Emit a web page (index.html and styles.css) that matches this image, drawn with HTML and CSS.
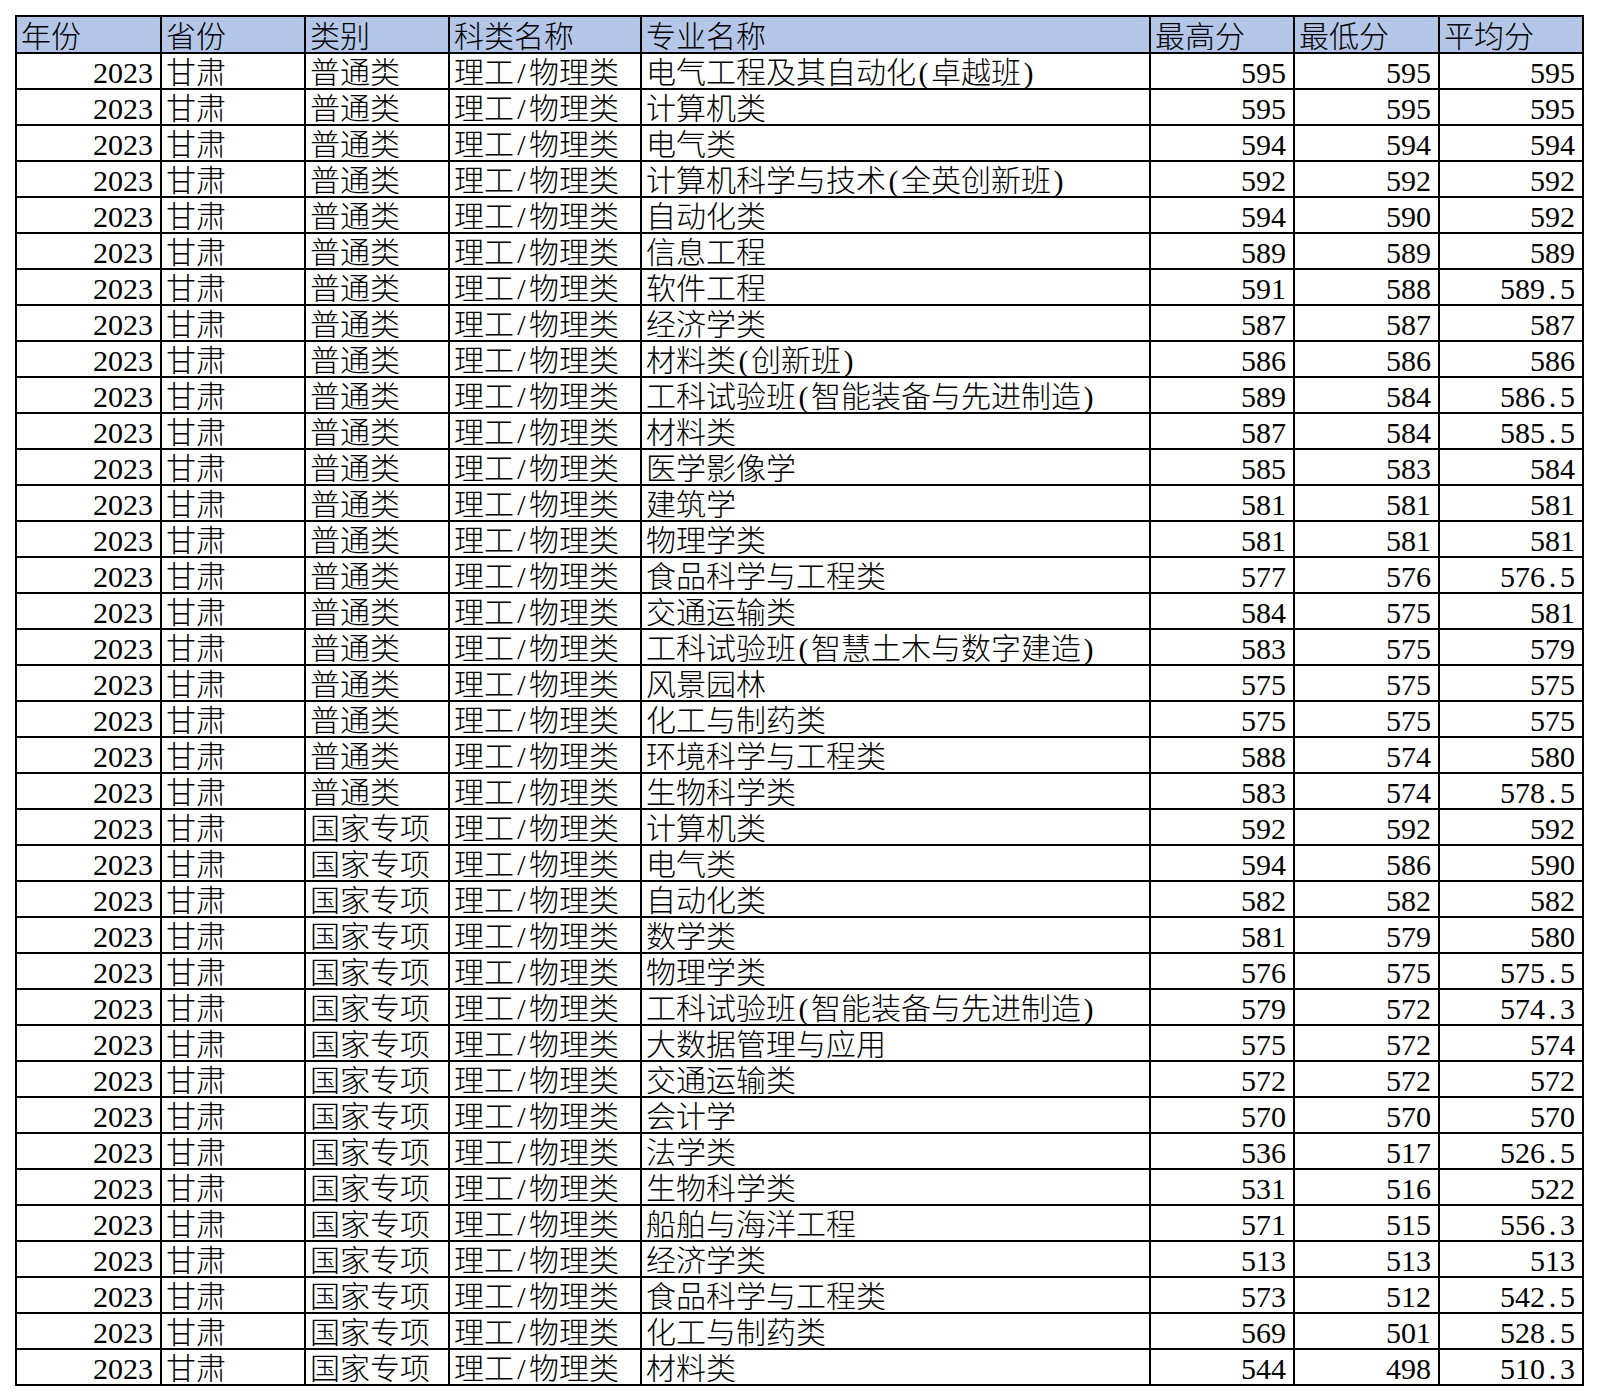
FILE: index.html
```html
<!DOCTYPE html>
<html lang="zh-CN">
<head>
<meta charset="utf-8">
<title>2023 甘肃 录取分数</title>
<link rel="stylesheet" href="styles.css">
</head>
<body>
<div class="sheet">
  <div class="row head"><div class="c">年份</div><div class="c">省份</div><div class="c">类别</div><div class="c">科类名称</div><div class="c">专业名称</div><div class="c">最高分</div><div class="c">最低分</div><div class="c">平均分</div></div>
  <div class="row"><div class="c n">2023</div><div class="c">甘肃</div><div class="c">普通类</div><div class="c">理工<span class="hw">/</span>物理类</div><div class="c">电气工程及其自动化<span class="hw">(</span>卓越班<span class="hw">)</span></div><div class="c n">595</div><div class="c n">595</div><div class="c n">595</div></div>
  <div class="row"><div class="c n">2023</div><div class="c">甘肃</div><div class="c">普通类</div><div class="c">理工<span class="hw">/</span>物理类</div><div class="c">计算机类</div><div class="c n">595</div><div class="c n">595</div><div class="c n">595</div></div>
  <div class="row"><div class="c n">2023</div><div class="c">甘肃</div><div class="c">普通类</div><div class="c">理工<span class="hw">/</span>物理类</div><div class="c">电气类</div><div class="c n">594</div><div class="c n">594</div><div class="c n">594</div></div>
  <div class="row"><div class="c n">2023</div><div class="c">甘肃</div><div class="c">普通类</div><div class="c">理工<span class="hw">/</span>物理类</div><div class="c">计算机科学与技术<span class="hw">(</span>全英创新班<span class="hw">)</span></div><div class="c n">592</div><div class="c n">592</div><div class="c n">592</div></div>
  <div class="row"><div class="c n">2023</div><div class="c">甘肃</div><div class="c">普通类</div><div class="c">理工<span class="hw">/</span>物理类</div><div class="c">自动化类</div><div class="c n">594</div><div class="c n">590</div><div class="c n">592</div></div>
  <div class="row"><div class="c n">2023</div><div class="c">甘肃</div><div class="c">普通类</div><div class="c">理工<span class="hw">/</span>物理类</div><div class="c">信息工程</div><div class="c n">589</div><div class="c n">589</div><div class="c n">589</div></div>
  <div class="row"><div class="c n">2023</div><div class="c">甘肃</div><div class="c">普通类</div><div class="c">理工<span class="hw">/</span>物理类</div><div class="c">软件工程</div><div class="c n">591</div><div class="c n">588</div><div class="c n">589<span class="hw">.</span>5</div></div>
  <div class="row"><div class="c n">2023</div><div class="c">甘肃</div><div class="c">普通类</div><div class="c">理工<span class="hw">/</span>物理类</div><div class="c">经济学类</div><div class="c n">587</div><div class="c n">587</div><div class="c n">587</div></div>
  <div class="row"><div class="c n">2023</div><div class="c">甘肃</div><div class="c">普通类</div><div class="c">理工<span class="hw">/</span>物理类</div><div class="c">材料类<span class="hw">(</span>创新班<span class="hw">)</span></div><div class="c n">586</div><div class="c n">586</div><div class="c n">586</div></div>
  <div class="row"><div class="c n">2023</div><div class="c">甘肃</div><div class="c">普通类</div><div class="c">理工<span class="hw">/</span>物理类</div><div class="c">工科试验班<span class="hw">(</span>智能装备与先进制造<span class="hw">)</span></div><div class="c n">589</div><div class="c n">584</div><div class="c n">586<span class="hw">.</span>5</div></div>
  <div class="row"><div class="c n">2023</div><div class="c">甘肃</div><div class="c">普通类</div><div class="c">理工<span class="hw">/</span>物理类</div><div class="c">材料类</div><div class="c n">587</div><div class="c n">584</div><div class="c n">585<span class="hw">.</span>5</div></div>
  <div class="row"><div class="c n">2023</div><div class="c">甘肃</div><div class="c">普通类</div><div class="c">理工<span class="hw">/</span>物理类</div><div class="c">医学影像学</div><div class="c n">585</div><div class="c n">583</div><div class="c n">584</div></div>
  <div class="row"><div class="c n">2023</div><div class="c">甘肃</div><div class="c">普通类</div><div class="c">理工<span class="hw">/</span>物理类</div><div class="c">建筑学</div><div class="c n">581</div><div class="c n">581</div><div class="c n">581</div></div>
  <div class="row"><div class="c n">2023</div><div class="c">甘肃</div><div class="c">普通类</div><div class="c">理工<span class="hw">/</span>物理类</div><div class="c">物理学类</div><div class="c n">581</div><div class="c n">581</div><div class="c n">581</div></div>
  <div class="row"><div class="c n">2023</div><div class="c">甘肃</div><div class="c">普通类</div><div class="c">理工<span class="hw">/</span>物理类</div><div class="c">食品科学与工程类</div><div class="c n">577</div><div class="c n">576</div><div class="c n">576<span class="hw">.</span>5</div></div>
  <div class="row"><div class="c n">2023</div><div class="c">甘肃</div><div class="c">普通类</div><div class="c">理工<span class="hw">/</span>物理类</div><div class="c">交通运输类</div><div class="c n">584</div><div class="c n">575</div><div class="c n">581</div></div>
  <div class="row"><div class="c n">2023</div><div class="c">甘肃</div><div class="c">普通类</div><div class="c">理工<span class="hw">/</span>物理类</div><div class="c">工科试验班<span class="hw">(</span>智慧土木与数字建造<span class="hw">)</span></div><div class="c n">583</div><div class="c n">575</div><div class="c n">579</div></div>
  <div class="row"><div class="c n">2023</div><div class="c">甘肃</div><div class="c">普通类</div><div class="c">理工<span class="hw">/</span>物理类</div><div class="c">风景园林</div><div class="c n">575</div><div class="c n">575</div><div class="c n">575</div></div>
  <div class="row"><div class="c n">2023</div><div class="c">甘肃</div><div class="c">普通类</div><div class="c">理工<span class="hw">/</span>物理类</div><div class="c">化工与制药类</div><div class="c n">575</div><div class="c n">575</div><div class="c n">575</div></div>
  <div class="row"><div class="c n">2023</div><div class="c">甘肃</div><div class="c">普通类</div><div class="c">理工<span class="hw">/</span>物理类</div><div class="c">环境科学与工程类</div><div class="c n">588</div><div class="c n">574</div><div class="c n">580</div></div>
  <div class="row"><div class="c n">2023</div><div class="c">甘肃</div><div class="c">普通类</div><div class="c">理工<span class="hw">/</span>物理类</div><div class="c">生物科学类</div><div class="c n">583</div><div class="c n">574</div><div class="c n">578<span class="hw">.</span>5</div></div>
  <div class="row"><div class="c n">2023</div><div class="c">甘肃</div><div class="c">国家专项</div><div class="c">理工<span class="hw">/</span>物理类</div><div class="c">计算机类</div><div class="c n">592</div><div class="c n">592</div><div class="c n">592</div></div>
  <div class="row"><div class="c n">2023</div><div class="c">甘肃</div><div class="c">国家专项</div><div class="c">理工<span class="hw">/</span>物理类</div><div class="c">电气类</div><div class="c n">594</div><div class="c n">586</div><div class="c n">590</div></div>
  <div class="row"><div class="c n">2023</div><div class="c">甘肃</div><div class="c">国家专项</div><div class="c">理工<span class="hw">/</span>物理类</div><div class="c">自动化类</div><div class="c n">582</div><div class="c n">582</div><div class="c n">582</div></div>
  <div class="row"><div class="c n">2023</div><div class="c">甘肃</div><div class="c">国家专项</div><div class="c">理工<span class="hw">/</span>物理类</div><div class="c">数学类</div><div class="c n">581</div><div class="c n">579</div><div class="c n">580</div></div>
  <div class="row"><div class="c n">2023</div><div class="c">甘肃</div><div class="c">国家专项</div><div class="c">理工<span class="hw">/</span>物理类</div><div class="c">物理学类</div><div class="c n">576</div><div class="c n">575</div><div class="c n">575<span class="hw">.</span>5</div></div>
  <div class="row"><div class="c n">2023</div><div class="c">甘肃</div><div class="c">国家专项</div><div class="c">理工<span class="hw">/</span>物理类</div><div class="c">工科试验班<span class="hw">(</span>智能装备与先进制造<span class="hw">)</span></div><div class="c n">579</div><div class="c n">572</div><div class="c n">574<span class="hw">.</span>3</div></div>
  <div class="row"><div class="c n">2023</div><div class="c">甘肃</div><div class="c">国家专项</div><div class="c">理工<span class="hw">/</span>物理类</div><div class="c">大数据管理与应用</div><div class="c n">575</div><div class="c n">572</div><div class="c n">574</div></div>
  <div class="row"><div class="c n">2023</div><div class="c">甘肃</div><div class="c">国家专项</div><div class="c">理工<span class="hw">/</span>物理类</div><div class="c">交通运输类</div><div class="c n">572</div><div class="c n">572</div><div class="c n">572</div></div>
  <div class="row"><div class="c n">2023</div><div class="c">甘肃</div><div class="c">国家专项</div><div class="c">理工<span class="hw">/</span>物理类</div><div class="c">会计学</div><div class="c n">570</div><div class="c n">570</div><div class="c n">570</div></div>
  <div class="row"><div class="c n">2023</div><div class="c">甘肃</div><div class="c">国家专项</div><div class="c">理工<span class="hw">/</span>物理类</div><div class="c">法学类</div><div class="c n">536</div><div class="c n">517</div><div class="c n">526<span class="hw">.</span>5</div></div>
  <div class="row"><div class="c n">2023</div><div class="c">甘肃</div><div class="c">国家专项</div><div class="c">理工<span class="hw">/</span>物理类</div><div class="c">生物科学类</div><div class="c n">531</div><div class="c n">516</div><div class="c n">522</div></div>
  <div class="row"><div class="c n">2023</div><div class="c">甘肃</div><div class="c">国家专项</div><div class="c">理工<span class="hw">/</span>物理类</div><div class="c">船舶与海洋工程</div><div class="c n">571</div><div class="c n">515</div><div class="c n">556<span class="hw">.</span>3</div></div>
  <div class="row"><div class="c n">2023</div><div class="c">甘肃</div><div class="c">国家专项</div><div class="c">理工<span class="hw">/</span>物理类</div><div class="c">经济学类</div><div class="c n">513</div><div class="c n">513</div><div class="c n">513</div></div>
  <div class="row"><div class="c n">2023</div><div class="c">甘肃</div><div class="c">国家专项</div><div class="c">理工<span class="hw">/</span>物理类</div><div class="c">食品科学与工程类</div><div class="c n">573</div><div class="c n">512</div><div class="c n">542<span class="hw">.</span>5</div></div>
  <div class="row"><div class="c n">2023</div><div class="c">甘肃</div><div class="c">国家专项</div><div class="c">理工<span class="hw">/</span>物理类</div><div class="c">化工与制药类</div><div class="c n">569</div><div class="c n">501</div><div class="c n">528<span class="hw">.</span>5</div></div>
  <div class="row"><div class="c n">2023</div><div class="c">甘肃</div><div class="c">国家专项</div><div class="c">理工<span class="hw">/</span>物理类</div><div class="c">材料类</div><div class="c n">544</div><div class="c n">498</div><div class="c n">510<span class="hw">.</span>3</div></div>
</div>
</body>
</html>
```

FILE: styles.css
```css
html, body {
  margin: 0;
  padding: 0;
  background: #ffffff;
}

body {
  padding: 15px 0 0 15px;
  font-family: "Liberation Serif", "Noto Sans CJK SC", serif;
  font-size: 30px;
  font-weight: 300;
  color: #000000;
}

.sheet {
  width: 1569px;
  box-sizing: border-box;
  border-left: 2px solid #000;
  border-top: 2px solid #000;
}

.row {
  display: grid;
  grid-template-columns: 145px 144px 144px 192px 509px 144px 145px 144px;
  height: 36px;
  box-sizing: border-box;
  border-bottom: 2px solid #000;
}

.row.head {
  height: 37px;
  background: #b4c6e7;
}

.c {
  box-sizing: border-box;
  border-right: 2px solid #000;
  padding: 4px 7px 0 4px;
  line-height: 30px;
  white-space: nowrap;
}

.head .c {
  padding-top: 5px;
}

.n {
  text-align: right;
}

.hw {
  display: inline-block;
  width: 0.5em;
  text-align: center;
}
```
